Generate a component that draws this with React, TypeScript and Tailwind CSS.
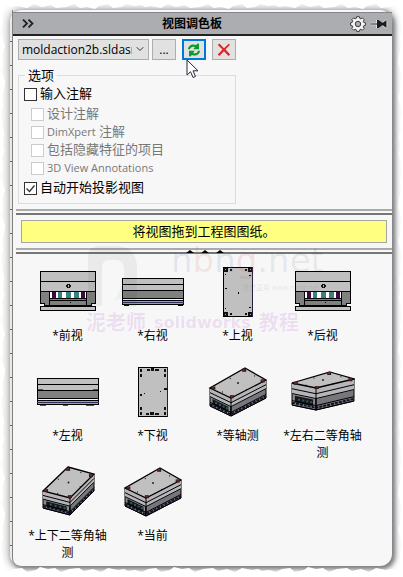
import React from 'react';
import { ChevronDown } from 'lucide-react';

type Pt = [number, number];

interface ViewItem {
  label: string;
  art: React.ReactNode;
}

const FrontArt = () => (
  <svg width="60" height="42" viewBox="0 0 60 42" shapeRendering="crispEdges" aria-hidden="true">
    <rect x="2" y="1" width="56" height="19" fill="#c0c0c0" />
    <path d="M3 21h9v14H6v-3H3zM57 21h-9v14h6v-3h3z" fill="#808080" />
    <rect x="11" y="21" width="38" height="7" fill="#fff" />
    <path d="M14 21h4v6h-4zM43 21h4v6h-4z" fill="#400840" />
    <path d="M20 21h4v6h-4zM28 21h5v6h-5zM36 21h5v6h-5z" fill="#3d8080" />
    <rect x="11" y="28" width="38" height="7" fill="#808080" />
    <rect x="2" y="36" width="56" height="4" fill="#c0c0c0" />
    <path
      d="M2.5 .5h55v10h-55zM2.5 10.5h55v10h-55zM11.5 20.5v15M48.5 20.5v15M11 27.5h38M11 29.5h38M6 34.5h48M2.5 35.5h55v4h-55zM2.5 21v11h4v4M57.5 21v11h-4v4"
      fill="none"
      stroke="#000"
    />
    <path d="M29 13h3v1h1v2h-1v1h-3v-1h-1v-2h1z" fill="#111" />
    <path d="M30 14h1v2h-1z" fill="#c0c0c0" />
    <path d="M32 31h1v1h-1z" fill="#000" />
  </svg>
);

const SideArt = ({ left = false }: { left?: boolean }) => (
  <svg width="64" height="30" viewBox="0 0 64 30" shapeRendering="crispEdges" aria-hidden="true">
    <rect x="1" y="1" width="62" height="13" fill="#c0c0c0" />
    <rect x="1" y="14" width="62" height="8" fill="#808080" />
    <rect x="1" y="23" width="62" height="4" fill="#a0a0a0" />
    <path d="M1.5 1.5h61v26h-61zM1 7.5h62M1 13.5h62M1 21.5h62M1 23.5h62" fill="none" stroke="#000" />
    <path d="M1 25.5h62" stroke="#303060" />
    {left ? (
      <path d="M2 12h5v1H2zM57 12h5v1h-5zM4 28h6v1H4zM27 28h5v1h-5zM50 28h8v1h-8z" fill="#555530" />
    ) : (
      <path d="M31 1h2v1h-2zM43 7h2v1h-2zM3 27h5v2H3zM57 27h5v2h-5z" fill="#000" />
    )}
  </svg>
);

const TopArt = () => (
  <svg width="32" height="52" viewBox="0 0 32 52" shapeRendering="crispEdges" aria-hidden="true">
    <rect x="1.5" y="1.5" width="29" height="49" fill="#c0c0c0" stroke="#000" />
    <path d="M30 1h1v50h-1z" fill="#202040" />
    <path
      d="M2 2h4v4H2zM26 2h4v4h-4zM2 46h4v4H2zM26 46h4v4h-4zM8 3h2v2H8zM23 3h2v2h-2zM8 47h2v2H8zM23 47h2v2h-2z"
      fill="#111"
    />
    <path d="M3 3h1v1H3zM28 3h1v1h-1zM3 48h1v1H3zM28 48h1v1h-1z" fill="#aaa" />
    <path d="M3 8h1v1H3zM27 9h2v1h-2zM3 22h2v1H3zM16 26h1v2h-1zM3 42h1v1H3zM27 41h2v1h-2z" fill="#000" />
  </svg>
);

const BottomArt = () => (
  <svg width="32" height="52" viewBox="0 0 32 52" shapeRendering="crispEdges" aria-hidden="true">
    <rect x="1.5" y="1.5" width="29" height="49" fill="#c0c0c0" stroke="#000" />
    <path d="M30 1h1v50h-1z" fill="#202050" />
    <path
      d="M3 3h2v3H3zM27 3h2v3h-2zM3 8h2v3H3zM27 8h2v3h-2zM3 41h2v3H3zM27 41h2v3h-2zM3 46h2v3H3zM27 46h2v3h-2zM10 3h3v2h-3zM14 2h3v3h-3zM18 3h4v2h-4zM9 47h3v2H9zM13 46h4v3h-4zM18 47h4v2h-4zM3 28h2v2H3zM27 22h3v2h-3zM7 27h1v1H7zM23 25h1v1h-1z"
      fill="#111"
    />
  </svg>
);

const mix = (a: Pt, b: Pt, t: number): Pt => [a[0] + (b[0] - a[0]) * t, a[1] + (b[1] - a[1]) * t];
const down = (p: Pt, y: number): Pt => [p[0], p[1] + y];
const poly = (pts: Pt[]) => pts.map((p) => p.join(',')).join(' ');

// corners of the lid: back, right, front, left
const BoxArt = ({ corners, depth, width = 64 }: { corners: [Pt, Pt, Pt, Pt]; depth: number; width?: number }) => {
  const [back, right, front, left] = corners;
  const inset = corners.map((p, i) => mix(p, corners[(i + 2) % 4], 0.06));
  const bands = [0.26, 0.48, 0.8, 1];
  return (
    <svg width={width} height="52" viewBox={`0 0 ${width} 52`} aria-hidden="true">
      <polygon points={poly([left, front, down(front, depth), down(left, depth)])} fill="#8b8b90" stroke="#000" />
      <polygon points={poly([front, right, down(right, depth), down(front, depth)])} fill="#77777b" stroke="#000" />
      <polygon
        points={poly([left, front, right, down(right, depth / 2), down(front, depth / 2), down(left, depth / 2)])}
        fill="#b5b5ba"
      />
      <polygon
        points={poly([
          mix(down(left, depth * 0.55), down(front, depth * 0.55), 0.12),
          mix(down(left, depth * 0.55), down(front, depth * 0.55), 0.88),
          mix(down(left, depth * 0.86), down(front, depth * 0.86), 0.88),
          mix(down(left, depth * 0.86), down(front, depth * 0.86), 0.12),
        ])}
        fill="#15171a"
      />
      {[0.25, 0.43, 0.6, 0.76].map((t) => {
        const [x, y] = mix(down(left, depth * 0.7), down(front, depth * 0.7), t);
        return <rect key={t} x={x} y={y - 1} width="2" height="2" fill="#2c5c5c" />;
      })}
      {bands.map((b) => (
        <polyline
          key={b}
          points={poly([down(left, depth * b), down(front, depth * b), down(right, depth * b)])}
          fill="none"
          stroke="#000"
        />
      ))}
      <polyline
        points={poly([down(left, depth * 0.9), down(front, depth * 0.9), down(right, depth * 0.9)])}
        fill="none"
        stroke="#111128"
        strokeDasharray="3 1"
        strokeWidth="2"
      />
      <polygon points={poly([back, right, front, left])} fill="#c0c0c0" stroke="#000" strokeWidth="1.3" />
      <path d={`M${front[0]} ${front[1]}v${depth}`} stroke="#000" />
      {inset.map(([x, y], i) => (
        <g key={i}>
          <rect x={x - 2} y={y - 1} width="4" height="3" fill="#222" />
          <rect x={x - 1} y={y - 1} width="2" height="2" fill="#8d1c1c" />
        </g>
      ))}
      {corners.map((p, i) => {
        const [x, y] = mix(mix(p, corners[(i + 1) % 4], 0.5), corners[(i + 2) % 4], 0.06);
        return <rect key={i} x={x} y={y} width="1" height="1" fill="#000" />;
      })}
      <circle cx={(left[0] + right[0]) / 2} cy={(back[1] + front[1]) / 2} r="1" fill="#222" />
    </svg>
  );
};

const views: ViewItem[] = [
  { label: '*前视', art: <FrontArt /> },
  { label: '*右视', art: <SideArt /> },
  { label: '*上视', art: <TopArt /> },
  { label: '*后视', art: <FrontArt /> },
  { label: '*左视', art: <SideArt left /> },
  { label: '*下视', art: <BottomArt /> },
  { label: '*等轴测', art: <BoxArt corners={[[39, 2], [60, 14], [25, 32], [4, 22]]} depth={18} /> },
  { label: '*左右二等角轴测', art: <BoxArt corners={[[39, 6], [63, 13], [25, 22], [1, 17]]} depth={22} /> },
  { label: '*上下二等角轴测', art: <BoxArt corners={[[28, 1], [54, 8], [30, 32], [3, 25]]} depth={17} width={56} /> },
  { label: '*当前', art: <BoxArt corners={[[39, 2], [60, 14], [25, 32], [4, 22]]} depth={18} /> },
];

interface CheckProps {
  id: string;
  label: React.ReactNode;
  checked?: boolean;
  disabled?: boolean;
}

const Check: React.FC<CheckProps> = ({ id, label, checked, disabled }) => (
  <div className={disabled ? 'flex h-[18px] items-center gap-[3px] pl-[7px] text-[#777]' : 'flex h-[22px] items-center gap-[3px]'}>
    <span className="relative flex size-[13px] shrink-0">
      <input
        id={id}
        type="checkbox"
        defaultChecked={checked}
        disabled={disabled}
        className="peer size-[13px] appearance-none border border-[#333] bg-white disabled:border-[#ccc]"
      />
      <svg viewBox="0 0 13 13" className="pointer-events-none absolute inset-0 hidden peer-checked:block" aria-hidden="true">
        <path d="M2.5 6.5l3 3 5-6" fill="none" stroke="#333" strokeWidth="1.3" />
      </svg>
    </span>
    <label htmlFor={id}>{label}</label>
  </div>
);

const Splitter = ({ grip = false }: { grip?: boolean }) => (
  <div className="relative ml-[3px] h-[6px] border-t-2 border-b-2 border-t-[#aaa] border-b-[#777]">
    {grip && (
      <svg width="38" height="3" viewBox="0 0 38 3" className="absolute top-0 left-[170px]" aria-hidden="true">
        <path d="M0 3l4-3 4 3zM15 3l4-3 4 3zM30 3l4-3 4 3z" fill="#000" />
      </svg>
    )}
  </div>
);

const GearIcon = () => (
  <svg width="16" height="16" viewBox="0 0 16 16" aria-hidden="true">
    <path
      d="M6.7 .7h2.6l.5 1.7 1 .4 1.6-.9 1.8 1.8-.9 1.6.4 1 1.7.5v2.5l-1.7.5-.4 1 .9 1.600-1.8 1.8-1.6-.9-1 .4-.5 1.700H6.7l-.5-1.7-1-.4-1.6.9-1.8-1.8.9-1.6-.4-1L.6 9.3V6.8l1.7-.5.4-1-.9-1.6 1.8-1.8 1.6.9 1-.4z"
      fill="#f4f4f4"
      stroke="#3c3c3c"
      strokeLinejoin="round"
    />
    <circle cx="8" cy="8" r="2.7" fill="#acadb1" stroke="#3c3c3c" />
  </svg>
);

const PinIcon = () => (
  <svg width="18" height="12" viewBox="0 0 18 12" aria-hidden="true">
    <path
      d="M1 6h6M7.5 2v8M8 4l3 1.5h2l3-2.5v6l-3-2.5h-2L8 8z"
      fill="#eee"
      stroke="#eee"
      strokeWidth="2.5"
      strokeLinejoin="round"
    />
    <path d="M1 5.500h6v1H1zM7 2h1.5l3.500 2.5h1L16.500 2v8L13 7.500h-1L8.500 10H7z" fill="#1c1c1c" />
  </svg>
);

const RefreshIcon = () => (
  <svg width="14" height="14" viewBox="0 0 14 14" aria-hidden="true">
    <path d="M1 6.3C1.3 2.6 5.3.3 9 2l1.7-1.5 1.3.2v5.6H6.8V5.2l1.2-1.1C5.6 3 3.6 4 3 6.3z" fill="#0c9a2c" />
    <path d="M13 7.7c-.3 3.7-4.3 6-8 4.3l-1.7 1.5-1.3-.2V7.7h5.2v1.1L6 9.9c2.4 1.1 4.4.1 5-2.2z" fill="#0c9a2c" />
  </svg>
);

const DeleteIcon = () => (
  <svg width="14" height="14" viewBox="0 0 14 14" aria-hidden="true">
    <path d="M.8 2L2.3.6 7 5.200 11.800.8l1.200 1L8.500 6.600l4.700 4.900-1.700 1.500L7 8.300 2.300 13 .8 11.600l4.700-5z" fill="#e02424" />
  </svg>
);

const CursorIcon = () => (
  <svg width="13" height="20" viewBox="0 0 13 20" className="pointer-events-none absolute top-5 left-1 z-10" aria-hidden="true">
    <path d="M1 1v15l3.5-3.3 2.6 5.8 2.4-1-2.5-5.7H12z" fill="#fff" stroke="#222a3a" />
  </svg>
);

// ragged paper edge, repeated along each side of the page
const TornEdges = () => (
  <div className="pointer-events-none absolute inset-0" aria-hidden="true">
    <svg className="absolute inset-0 size-full">
      <defs>
        <pattern id="torn-top" width="134" height="10" patternUnits="userSpaceOnUse">
          <path d="M0 0h134v6l-7-2-6 3-8 1-5-4-9 2-4 3-8-2-7 1-6-4-8 3-10 1-5-3-9 2-8-3-7 4-10-2-6 1-4-2-7 1z" fill="#fff" />
        </pattern>
        <pattern id="torn-left" width="9" height="144" patternUnits="userSpaceOnUse">
          <path d="M0 0h3l1 8-2 7 1 9-2 6 2 10 2 7-3 8 1 9-2 6 4 11-1 8-2 9 1 8-2 7 1 11 2 9-1 11H0z" fill="#fff" />
        </pattern>
      </defs>
      <rect width="100%" height="10" fill="url(#torn-top)" />
      <rect width="9" height="100%" fill="url(#torn-left)" />
    </svg>
    <svg className="absolute inset-0 size-full rotate-180">
      <rect width="100%" height="10" fill="url(#torn-top)" />
      <rect width="9" height="100%" fill="url(#torn-left)" />
    </svg>
  </div>
);

const Watermark = () => (
  <div className="pointer-events-none absolute top-[231px] left-[71px] select-none" aria-hidden="true">
    <div className="flex gap-[15px]">
      <svg width="72" height="72" viewBox="0 0 72 72">
        <path d="M4 65V16q0-11 11-11h16q22 0 22 22v38H40V28q0-9-9-9h-5q-8 0-8 8v38z" fill="#000" opacity=".05" />
        <path d="M30 60l10-20v25h13V52z" fill="#40a060" opacity=".06" />
      </svg>
      <div>
        <p className="font-['DejaVu_Sans'] text-[34px] leading-[38px]">
          <span className="text-[#5566cc]/12">n</span>
          <span className="text-[#cc6633]/12">b</span>
          <span className="text-[#4466aa]/12">n</span>
          <span className="text-[#cc4444]/12">g</span>
          <span className="text-black/8">.net</span>
        </p>
        <p className="pt-1 pl-[71px] text-[7px] leading-[10px] text-black/10">请勿盗用 www.nbng.net</p>
      </div>
    </div>
    <p className="flex items-center gap-2 pl-[2px] font-['DejaVu_Sans','Noto_Sans_CJK_SC',sans-serif] text-[20px] leading-5 font-bold whitespace-nowrap text-[#a030c0]/12">
      <span>泥老师</span>
      <span className="text-[16px]">solidworks</span>
      <span>教程</span>
    </p>
  </div>
);

const toolButton = 'flex h-[21px] w-6 items-center justify-center border border-[#adadad] bg-[#e1e1e1] text-[12px]';

const App: React.FC = () => {
  return (
    <div className="relative overflow-hidden bg-white p-[10px] pr-[11px] font-['Open_Sans','Noto_Sans_CJK_SC',sans-serif] text-[13px] text-black">
      <main className="relative flex min-h-[556px] rounded-xl bg-[#f7f7f7] shadow-[2px_2px_4px_1px_#7c7d82,0_0_8px_3px_#c4c4c4]">
        <div className="my-2 w-[2px] shrink-0 bg-[repeating-linear-gradient(#efe8e2_0_23px,#666_23px_24px)]" />
        <div className="relative min-w-0 flex-1 overflow-hidden rounded-br-xl rounded-bl-lg border-l border-[#808080] pt-[2px]">
          <header className="flex h-6 items-center border-t border-b-2 border-t-[#85868b] border-b-[#222] bg-[#acadb1] pr-1 pl-[9px]">
            <button type="button" aria-label="收起">
              <svg width="12" height="9" viewBox="0 0 12 9" aria-hidden="true">
                <path d="M1 .5l4 4-4 4M6.5 .5l4 4-4 4" fill="none" stroke="#222" strokeWidth="1.8" />
              </svg>
            </button>
            <h1 className="flex-1 text-center text-[12px] font-bold">视图调色板</h1>
            <div className="flex items-center gap-1">
              <button type="button" aria-label="设置">
                <GearIcon />
              </button>
              <button type="button" aria-label="固定">
                <PinIcon />
              </button>
            </div>
          </header>

          <div className="mt-[3px] ml-[5px] flex gap-[6px]">
            <div className="flex gap-[3px]">
              <div className="relative">
                <select
                  aria-label="模型"
                  className="block h-[21px] w-[131px] appearance-none border border-[#adadad] bg-[#e1e1e1] pr-4 pl-[3px] text-[12px]"
                >
                  <option>moldaction2b.sldasm</option>
                </select>
                <ChevronDown size={12} strokeWidth={2} className="pointer-events-none absolute top-1 right-[3px] text-[#333]" />
              </div>
              <button type="button" className={toolButton}>
                ...
              </button>
            </div>
            <div className="relative">
              <button
                type="button"
                aria-label="刷新"
                className="flex h-[21px] w-6 items-center justify-center border-2 border-[#0078d7] bg-[#e1e1e1]"
              >
                <RefreshIcon />
              </button>
              <CursorIcon />
            </div>
            <button type="button" aria-label="删除" className={toolButton}>
              <DeleteIcon />
            </button>
          </div>

          <fieldset className="mt-[7px] ml-[5px] w-[218px] border border-[#dcdcdc] pb-1 pl-[5px]">
            <legend className="ml-px px-[3px] leading-4">选项</legend>
            <Check id="import" label="输入注解" />
            <Check id="design" label="设计注解" disabled />
            <Check
              id="dimxpert"
              label={
                <>
                  <span className="text-[11px]">DimXpert</span> 注解
                </>
              }
              disabled
            />
            <Check id="hidden" label="包括隐藏特征的项目" disabled />
            <Check id="view3d" label={<span className="text-[11px]">3D View Annotations</span>} disabled />
            <Check id="auto" label="自动开始投影视图" checked />
          </fieldset>

          <div className="mt-[5px]">
            <Splitter />
            <p className="my-[5px] mr-[5px] ml-2 h-[23px] border border-[#a5a5a5] bg-[#ffff80] text-center leading-5">
              将视图拖到工程图图纸。
            </p>
            <Splitter grip />
          </div>

          <div className="mt-3 grid auto-rows-[100px] grid-cols-[repeat(auto-fill,85px)] pl-3">
            {views.map((v) => (
              <figure key={v.label} className="flex flex-col items-center">
                <div className="flex h-[52px] items-center">{v.art}</div>
                <figcaption className="mt-[9px] w-20 text-center text-[12px] leading-[17px]">{v.label}</figcaption>
              </figure>
            ))}
          </div>
          <Watermark />
        </div>
      </main>
      <TornEdges />
    </div>
  );
};

export default App;
